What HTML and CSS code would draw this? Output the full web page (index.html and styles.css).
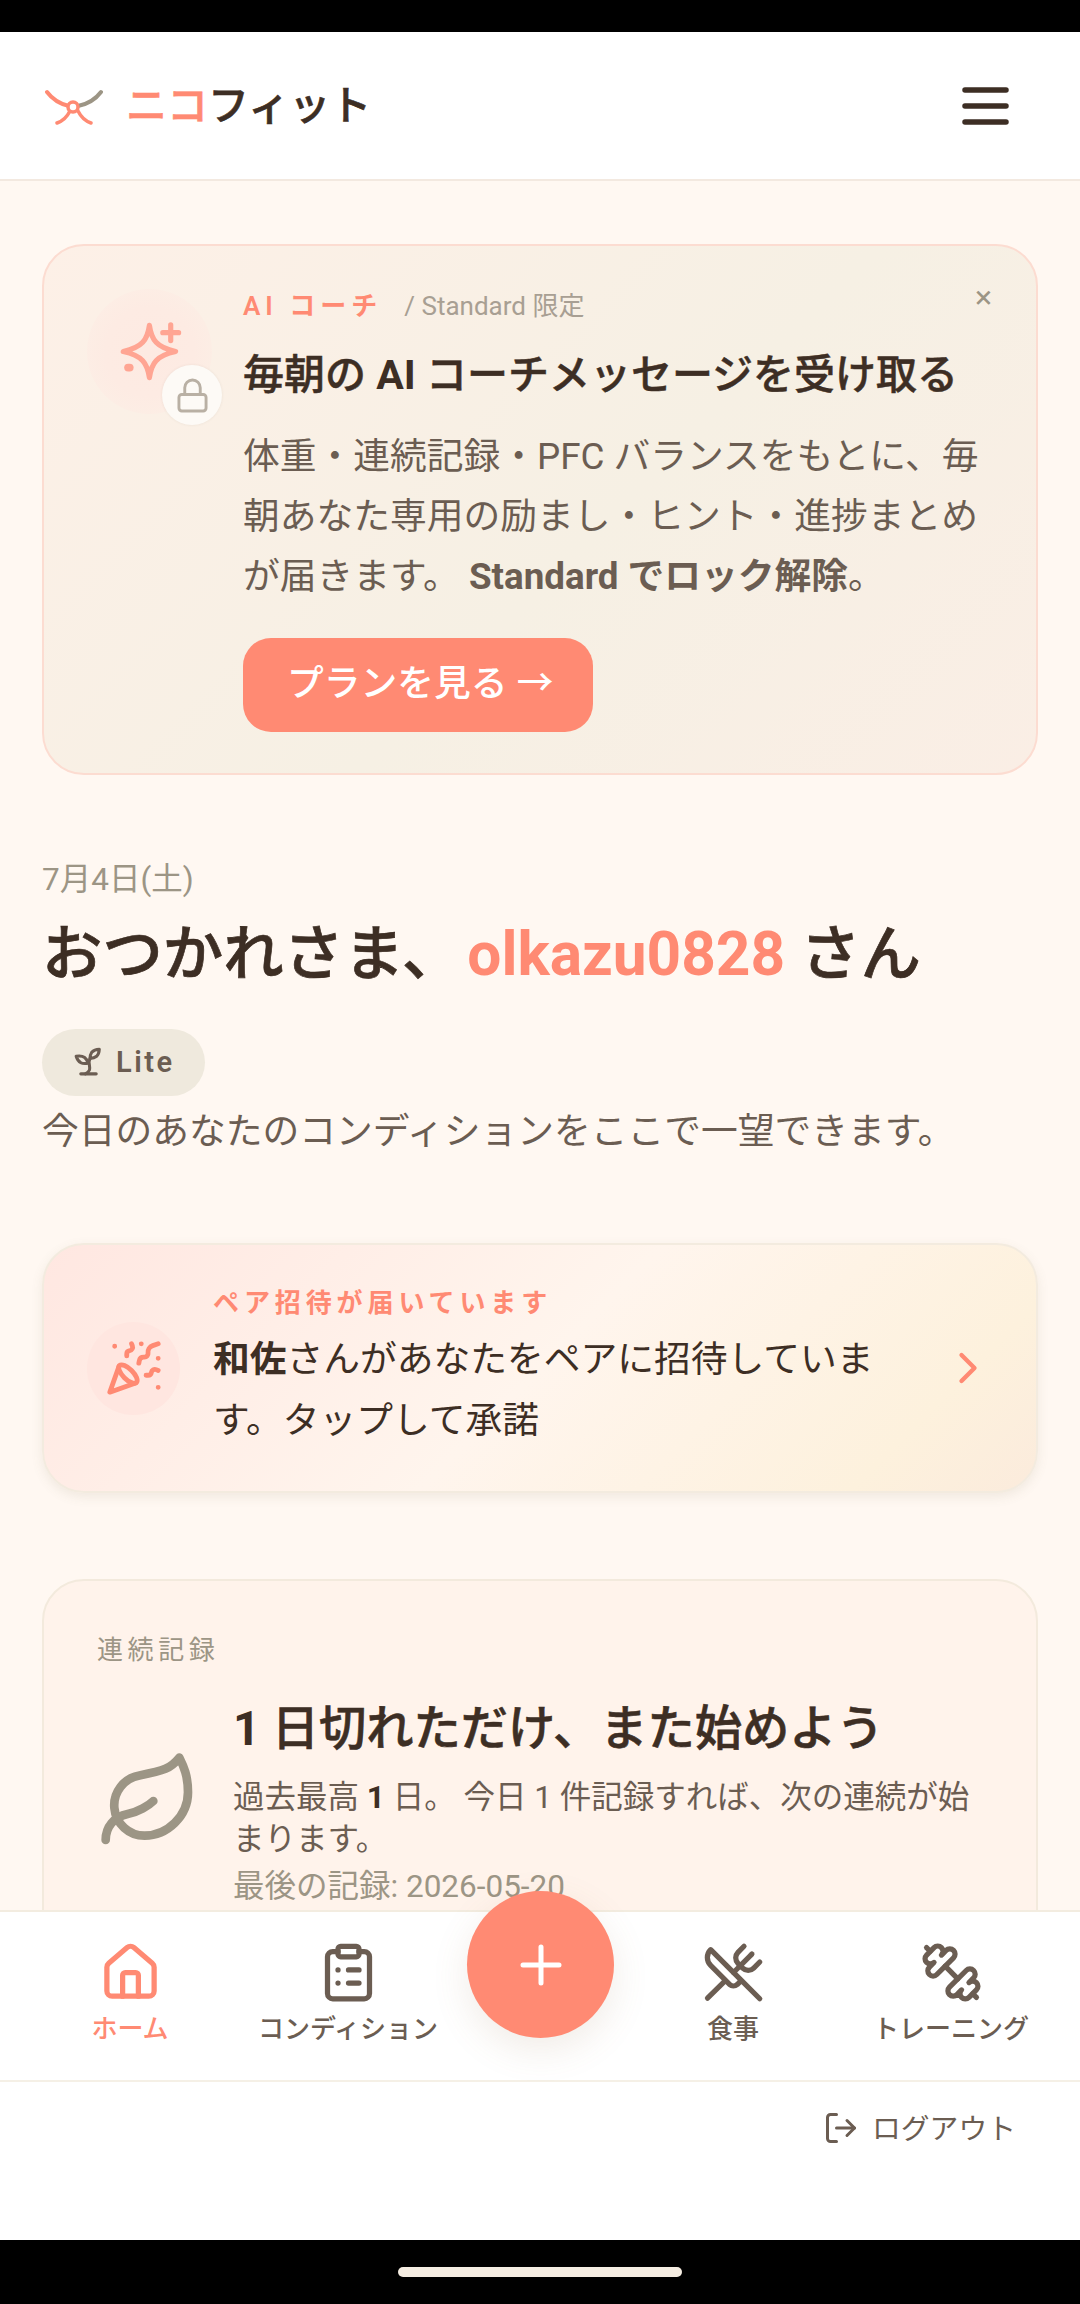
FILE: index.html
```html
<!DOCTYPE html>
<html lang="ja">
<head>
    <meta charset="UTF-8">
    <meta name="viewport" content="width=device-width, initial-scale=1.0">
    <title>ニコフィット</title>
    <link rel="stylesheet" href="styles.css">
</head>
<body>
<div class="phone">
    <div class="status-bar"></div>

    <header class="app-header">
        <div class="brand">
            <svg class="brand-logo" viewBox="0 0 58 36" fill="none" stroke-width="4" stroke-linecap="round">
                <path d="M2 3C8 11 15 15 24 17" stroke="#ff8a73"/>
                <path d="M56 3C50 11 43 15 33 17" stroke="#9c9585"/>
                <path d="M25 22C22 28 18 32 12 34M33 22C36 28 40 32 46 34" stroke="#ff8a73" stroke-width="3.5"/>
                <circle cx="28" cy="18" r="5" stroke="#ff8a73" stroke-width="3.5" fill="#fff"/>
            </svg>
            <span class="brand-name"><span class="coral">ニコ</span>フィット</span>
        </div>
        <svg class="menu-icon" viewBox="0 0 47 38" fill="none" stroke="#3d2e24" stroke-width="5.5" stroke-linecap="round">
            <path d="M3 3h41M3 19h41M3 35h41"/>
        </svg>
    </header>

    <main class="content">
        <section class="coach-card">
            <span class="coach-close">×</span>
            <div class="coach-icon">
                <svg class="sparkle" viewBox="0 0 24 24" fill="none" stroke="#ffa593" stroke-width="1.7" stroke-linecap="round" stroke-linejoin="round">
                    <path d="M10 3.400C10.700 8.200 12.300 10.600 18.600 12C12.300 13.400 10.700 15.800 10 20.600C9.300 15.800 7.700 13.400 1.400 12C7.700 10.600 9.300 8.200 10 3.400Z"/>
                    <path d="M17 3.200v5.200M14.400 5.800h5.200"/>
                    <path d="M3 17.300h.5" stroke-width="2.600"/>
                </svg>
                <span class="lock-badge">
                    <svg viewBox="0 0 32 36" fill="none" stroke="#b9b0a4" stroke-width="3" stroke-linecap="round" stroke-linejoin="round">
                        <rect x="2" y="17" width="28" height="17" rx="3"/>
                        <path d="M8 17v-7a8 8 0 0 1 16 0v7"/>
                    </svg>
                </span>
            </div>
            <div class="coach-body">
                <p class="coach-tag"><span class="coach-tag-name">AI コーチ</span><span class="coach-tag-note">/ Standard 限定</span></p>
                <h2 class="coach-title">毎朝の <b>AI</b> コーチメッセージを受け取る</h2>
                <p class="coach-text">体重・連続記録・PFC バランスをもとに、毎朝あなた専用の励まし・ヒント・進捗まとめが届きます。 <strong>Standard でロック解除</strong>。</p>
                <a class="plan-button">プランを見る →</a>
            </div>
        </section>

        <section class="greeting">
            <p class="greeting-date">7月4日(土)</p>
            <h1 class="greeting-title">おつかれさま、<span class="coral greeting-name">olkazu0828</span> さん</h1>
            <span class="plan-pill">
                <svg viewBox="0 0 24 24" fill="none" stroke="#6b5d52" stroke-width="2" stroke-linecap="round" stroke-linejoin="round">
                    <path d="M7 20h10"/>
                    <path d="M10 20c5.500-2.500.8-6.400 3-10"/>
                    <path d="M9.500 9.400c1.100.8 1.800 2.200 2.300 3.700-2 .4-3.500.4-4.800-.3-1.200-.6-2.300-1.900-3-4.200 2.800-.5 4.400 0 5.500.8z"/>
                    <path d="M14.100 6a7 7 0 0 0-1.100 4c1.900-.1 3.300-.6 4.300-1.400 1-1 1.600-2.300 1.700-4.600-2.700.1-4 1-4.900 2z"/>
                </svg>
                Lite
            </span>
            <p class="greeting-sub">今日のあなたのコンディションをここで一望できます。</p>
        </section>

        <section class="pair-card">
            <span class="pair-icon">
                <svg viewBox="0 0 24 24" fill="none" stroke="#ff8a73" stroke-width="2" stroke-linecap="round" stroke-linejoin="round">
                    <path d="M5.800 11.300 2 22l10.700-3.790"/>
                    <path d="M4 3h.01M22 8h.01M15 2h.01M22 20h.01"/>
                    <path d="m22 2-2.240.75a2.900 2.900 0 0 0-1.960 3.120c.1.860-.57 1.630-1.450 1.630h-.38c-.86 0-1.600.6-1.760 1.440L14 10"/>
                    <path d="m22 13-.82-.33c-.86-.34-1.820.2-1.980 1.110-.11.7-.72 1.220-1.430 1.220H17"/>
                    <path d="m11 2 .33.82c.34.860-.2 1.820-1.110 1.980C9.520 4.900 9 5.520 9 6.230V7"/>
                    <path d="M11 13c1.930 1.930 2.830 4.170 2 5-.83.83-3.070-.07-5-2-1.930-1.930-2.830-4.170-2-5 .83-.83 3.070.07 5 2Z"/>
                </svg>
            </span>
            <div class="pair-body">
                <p class="pair-label">ペア招待が届いています</p>
                <p class="pair-text"><strong>和佐</strong>さんがあなたをペアに招待しています。タップして承諾</p>
            </div>
            <svg class="pair-chevron" viewBox="0 0 24 24" fill="none" stroke="#ff8a73" stroke-width="2" stroke-linecap="round" stroke-linejoin="round">
                <path d="m9 18 6-6-6-6"/>
            </svg>
        </section>

        <section class="streak-card">
            <p class="streak-label">連続記録</p>
            <div class="streak-row">
                <svg class="streak-leaf" viewBox="0 0 24 24" fill="none" stroke="#9c9585" stroke-width="2" stroke-linecap="round" stroke-linejoin="round">
                    <path d="M11 20A7 7 0 0 1 9.800 6.100C15.500 5 17 4.480 19 2c1 2 2 4.180 2 8 0 5.500-4.780 10-10 10Z"/>
                    <path d="M2 21c0-3 1.850-5.360 5.080-6C9.500 14.520 12 13 13 12"/>
                </svg>
                <div class="streak-body">
                    <h3 class="streak-title"><b>1</b> 日切れただけ、また始めよう</h3>
                    <p class="streak-text">過去最高 <strong>1</strong> 日。 今日 1 件記録すれば、次の連続が始まります。</p>
                    <p class="streak-last">最後の記録: 2026-05-20</p>
                </div>
            </div>
        </section>
    </main>

    <nav class="tab-bar">
        <a class="tab tab-active">
            <svg viewBox="0 0 24 24"><path d="M3 10a2 2 0 0 1 .709-1.528l7-5.999a2 2 0 0 1 2.582 0l7 5.999A2 2 0 0 1 21 10v9a2 2 0 0 1-2 2H5a2 2 0 0 1-2-2z"/><path d="M15 21v-8a1 1 0 0 0-1-1h-4a1 1 0 0 0-1 1v8"/></svg>
            <span>ホーム</span>
        </a>
        <a class="tab">
            <svg viewBox="0 0 24 24"><rect x="8" y="2" width="8" height="4" rx="1"/><path d="M16 4h2a2 2 0 0 1 2 2v14a2 2 0 0 1-2 2H6a2 2 0 0 1-2-2V6a2 2 0 0 1 2-2h2"/><path d="M12 11h4M12 16h4M8 11h.01M8 16h.01"/></svg>
            <span>コンディション</span>
        </a>
        <span class="tab-gap"></span>
        <a class="tab">
            <svg viewBox="0 0 24 24"><path d="m16 2-2.300 2.300a3 3 0 0 0 0 4.200l1.800 1.800a3 3 0 0 0 4.200 0L22 8"/><path d="M15 15 3.300 3.300a4.200 4.200 0 0 0 0 6l7.300 7.300c.7.7 2 .7 2.800 0L15 15Zm0 0 7 7"/><path d="m2.100 21.800 6.400-6.300"/><path d="m19 5-7 7"/></svg>
            <span>食事</span>
        </a>
        <a class="tab">
            <svg viewBox="0 0 24 24"><path d="M14.400 14.400 9.600 9.600"/><path d="M18.657 21.485a2 2 0 1 1-2.829-2.828l-1.767 1.768a2 2 0 1 1-2.829-2.829l6.364-6.364a2 2 0 1 1 2.829 2.829l-1.768 1.767a2 2 0 1 1 2.828 2.829z"/><path d="m21.500 21.500-1.400-1.400"/><path d="M3.900 3.900 2.500 2.500"/><path d="M6.404 12.768a2 2 0 1 1-2.829-2.829l1.768-1.767a2 2 0 1 1-2.828-2.829l2.828-2.828a2 2 0 1 1 2.829 2.828l1.767-1.768a2 2 0 1 1 2.829 2.829z"/></svg>
            <span>トレーニング</span>
        </a>
        <button class="fab" type="button">
            <svg viewBox="0 0 42 42" fill="none" stroke="#fff" stroke-width="5" stroke-linecap="round"><path d="M21 3v36M3 21h36"/></svg>
        </button>
    </nav>

    <div class="logout-row">
        <a class="logout">
            <svg viewBox="0 0 24 24" fill="none" stroke="#6b5d52" stroke-width="2" stroke-linecap="round" stroke-linejoin="round"><path d="m16 17 5-5-5-5"/><path d="M21 12H9"/><path d="M9 21H5a2 2 0 0 1-2-2V5a2 2 0 0 1 2-2h4"/></svg>
            ログアウト
        </a>
    </div>

    <div class="gesture-bar"><span class="gesture-handle"></span></div>
</div>
</body>
</html>
```

FILE: styles.css
```css
* { box-sizing: border-box; }

body {
    margin: 0;
    background-color: #000;
    font-family: Roboto, "Noto Sans CJK JP", sans-serif;
    color: #3d2e24;
}
p, h1, h2, h3 { margin: 0; }
.coral { color: #ff8a73; }

.phone {
    display: flex;
    flex-direction: column;
    width: 1080px;
    height: 2304px;
    overflow: hidden;
}
.status-bar { flex: 0 0 32px; background-color: #000; }

/* header */
.app-header {
    flex: 0 0 149px;
    display: flex;
    align-items: center;
    justify-content: space-between;
    padding: 0 71px 0 45px;
    background-color: #fff;
    border-bottom: 2px solid #f3e9e0;
}
.brand { display: flex; align-items: center; gap: 23px; }
.brand-logo { width: 58px; height: 36px; margin-top: 2px; }
.brand-name { font-size: 41px; font-weight: 500; line-height: 50px; -webkit-text-stroke: 0.6px currentColor; }
.menu-icon { width: 47px; height: 38px; }

/* scrolled content */
.content {
    flex: 1;
    min-height: 0;
    overflow: hidden;
    padding: 63px 42px 0;
    background-color: #fff8f2;
}

.coach-card {
    position: relative;
    display: flex;
    height: 531px;
    padding: 43px 42px 0 43px;
    gap: 31px;
    background: linear-gradient(135deg, #fdf0e7 0%, #f6f0e4 55%, #faeee5 100%);
    border: 2px solid #fcdcd1;
    border-radius: 42px;
}
.coach-close {
    position: absolute;
    top: 31px;
    right: 44px;
    font-size: 32px;
    line-height: 40px;
    color: #9c9585;
}
.coach-icon {
    position: relative;
    flex: 0 0 125px;
    display: flex;
    align-items: center;
    justify-content: center;
    width: 125px;
    height: 125px;
    background: radial-gradient(circle, #fdeae2 0%, #fdebe3 50%, rgba(253, 235, 227, 0) 100%);
    border-radius: 50%;
}
.sparkle { width: 73px; height: 73px; margin-left: 11px; }
.lock-badge {
    position: absolute;
    top: 76px;
    left: 75px;
    display: flex;
    align-items: center;
    justify-content: center;
    width: 60px;
    height: 60px;
    background-color: #fdfaf6;
    border-radius: 50%;
    box-shadow: 0 0 3px rgba(61, 46, 36, 0.08);
}
.lock-badge svg { width: 31px; height: 35px; }

.coach-tag { display: flex; align-items: center; gap: 22px; height: 34px; font-size: 26px; line-height: 34px; }
.coach-tag-name { font-weight: 600; letter-spacing: 5px; color: #ff8a73; }
.coach-tag-note { color: #a89f93; }
.coach-title { margin-top: 26px; font-size: 41px; font-weight: 500; line-height: 52px; -webkit-text-stroke: 0.5px currentColor; }
.coach-title b { -webkit-text-stroke: 0; }
.coach-text { margin-top: 26px; font-size: 36.75px; line-height: 60px; color: #6b5d52; }
.coach-text strong { font-weight: 700; }
.plan-button {
    display: inline-block;
    margin-top: 31px;
    width: 350px;
    height: 94px;
    padding-left: 44px;
    font-size: 36.75px;
    font-weight: 500;
    line-height: 92px;
    color: #fff;
    background-color: #ff8a73;
    border-radius: 28px;
}

.greeting { margin-top: 82px; }
.greeting-date { font-size: 31.5px; line-height: 46px; color: #9c9585; }
.greeting-title { margin-top: 12px; font-size: 60.4px; font-weight: 500; line-height: 80px; -webkit-text-stroke: 0.7px currentColor; }
.greeting-name { margin-left: 5px; font-weight: 700; -webkit-text-stroke: 0; }
.plan-pill {
    display: flex;
    align-items: center;
    gap: 9px;
    width: 163px;
    height: 67px;
    margin-top: 34px;
    padding: 0 0 2px 28px;
    font-size: 29px;
    font-weight: 600;
    letter-spacing: 2.5px;
    color: #6b5d52;
    background-color: #efe9dd;
    border-radius: 34px;
}
.plan-pill svg { width: 37px; height: 37px; }
.greeting-sub { margin-top: 11px; font-size: 36.75px; line-height: 50px; color: #6b5d52; }

.pair-card {
    display: flex;
    align-items: center;
    height: 250px;
    margin-top: 86px;
    padding-left: 43px;
    background: linear-gradient(135deg, #ffe7e1 0%, #fff5ed 50%, #fdf1dd 85%, #fbebdc 100%);
    border: 2px solid #f3ebdf;
    border-radius: 42px;
    box-shadow: 0 4px 12px rgba(110, 95, 70, 0.1);
}
.pair-icon {
    flex: 0 0 93px;
    display: flex;
    align-items: center;
    justify-content: center;
    height: 93px;
    background-color: #ffe6e0;
    border-radius: 50%;
}
.pair-icon svg { width: 58px; height: 58px; }
.pair-body { flex: 0 0 670px; margin-left: 33px; }
.pair-label { font-size: 26px; font-weight: 600; letter-spacing: 4.9px; line-height: 34px; color: #ff8a73; }
.pair-text { margin-top: 9px; font-size: 36.75px; line-height: 61px; }
.pair-text strong { font-weight: 700; }
.pair-chevron { width: 52px; height: 52px; margin-left: 59px; }

.streak-card {
    height: 420px;
    margin-top: 86px;
    padding: 52px 53px 0;
    background-color: #fff3eb;
    border: 2px solid #f3eadd;
    border-radius: 42px;
}
.streak-label { font-size: 26px; letter-spacing: 4.6px; line-height: 34px; color: #9c9585; }
.streak-row { display: flex; align-items: flex-start; gap: 32px; margin-top: 31px; }
.streak-leaf { flex: 0 0 104px; width: 104px; height: 104px; margin-top: 51px; }
.streak-title { font-size: 47.25px; font-weight: 500; line-height: 62px; -webkit-text-stroke: 0.6px currentColor; }
.streak-title b { -webkit-text-stroke: 0; }
.streak-text { margin-top: 17px; font-size: 31.5px; line-height: 42px; color: #6b5d52; }
.streak-text strong { font-weight: 700; color: #3d2e24; }
.streak-last { margin-top: 5px; font-size: 31.5px; line-height: 42px; color: #9c9585; }

/* bottom tabs */
.tab-bar {
    position: relative;
    flex: 0 0 172px;
    display: grid;
    grid-template-columns: 260px 176px 208px 178px 258px;
    padding-top: 29px;
    background-color: #fff;
    border-top: 2px solid #f3ece0;
    border-bottom: 2px solid #f5f0e6;
}
.tab {
    display: flex;
    flex-direction: column;
    align-items: center;
    gap: 8px;
    font-size: 26px;
    font-weight: 500;
    line-height: 34px;
    color: #6b5d52;
    white-space: nowrap;
}
.tab svg {
    width: 63px;
    height: 63px;
    fill: none;
    stroke: currentColor;
    stroke-width: 2;
    stroke-linecap: round;
    stroke-linejoin: round;
}
.tab-active { color: #ff8a73; }
.fab {
    position: absolute;
    top: -21px;
    left: 467px;
    display: flex;
    align-items: center;
    justify-content: center;
    width: 147px;
    height: 147px;
    padding: 0;
    border: 0;
    border-radius: 50%;
    background-color: #ff8a73;
    box-shadow: 0 12px 36px rgba(150, 110, 70, 0.13);
}
.fab svg { width: 42px; height: 42px; }

.logout-row {
    flex: 0 0 158px;
    display: flex;
    justify-content: flex-end;
    padding: 26px 64px 0 0;
    background-color: #fff;
}
.logout { display: flex; align-items: center; gap: 13px; height: 36px; font-size: 28.8px; color: #6b5d52; }
.logout svg { width: 36px; height: 36px; margin-top: 4px; }

.gesture-bar {
    flex: 0 0 64px;
    display: flex;
    align-items: center;
    justify-content: center;
    background-color: #000;
}
.gesture-handle { width: 284px; height: 10px; background-color: #f5ede2; border-radius: 5px; }
```
